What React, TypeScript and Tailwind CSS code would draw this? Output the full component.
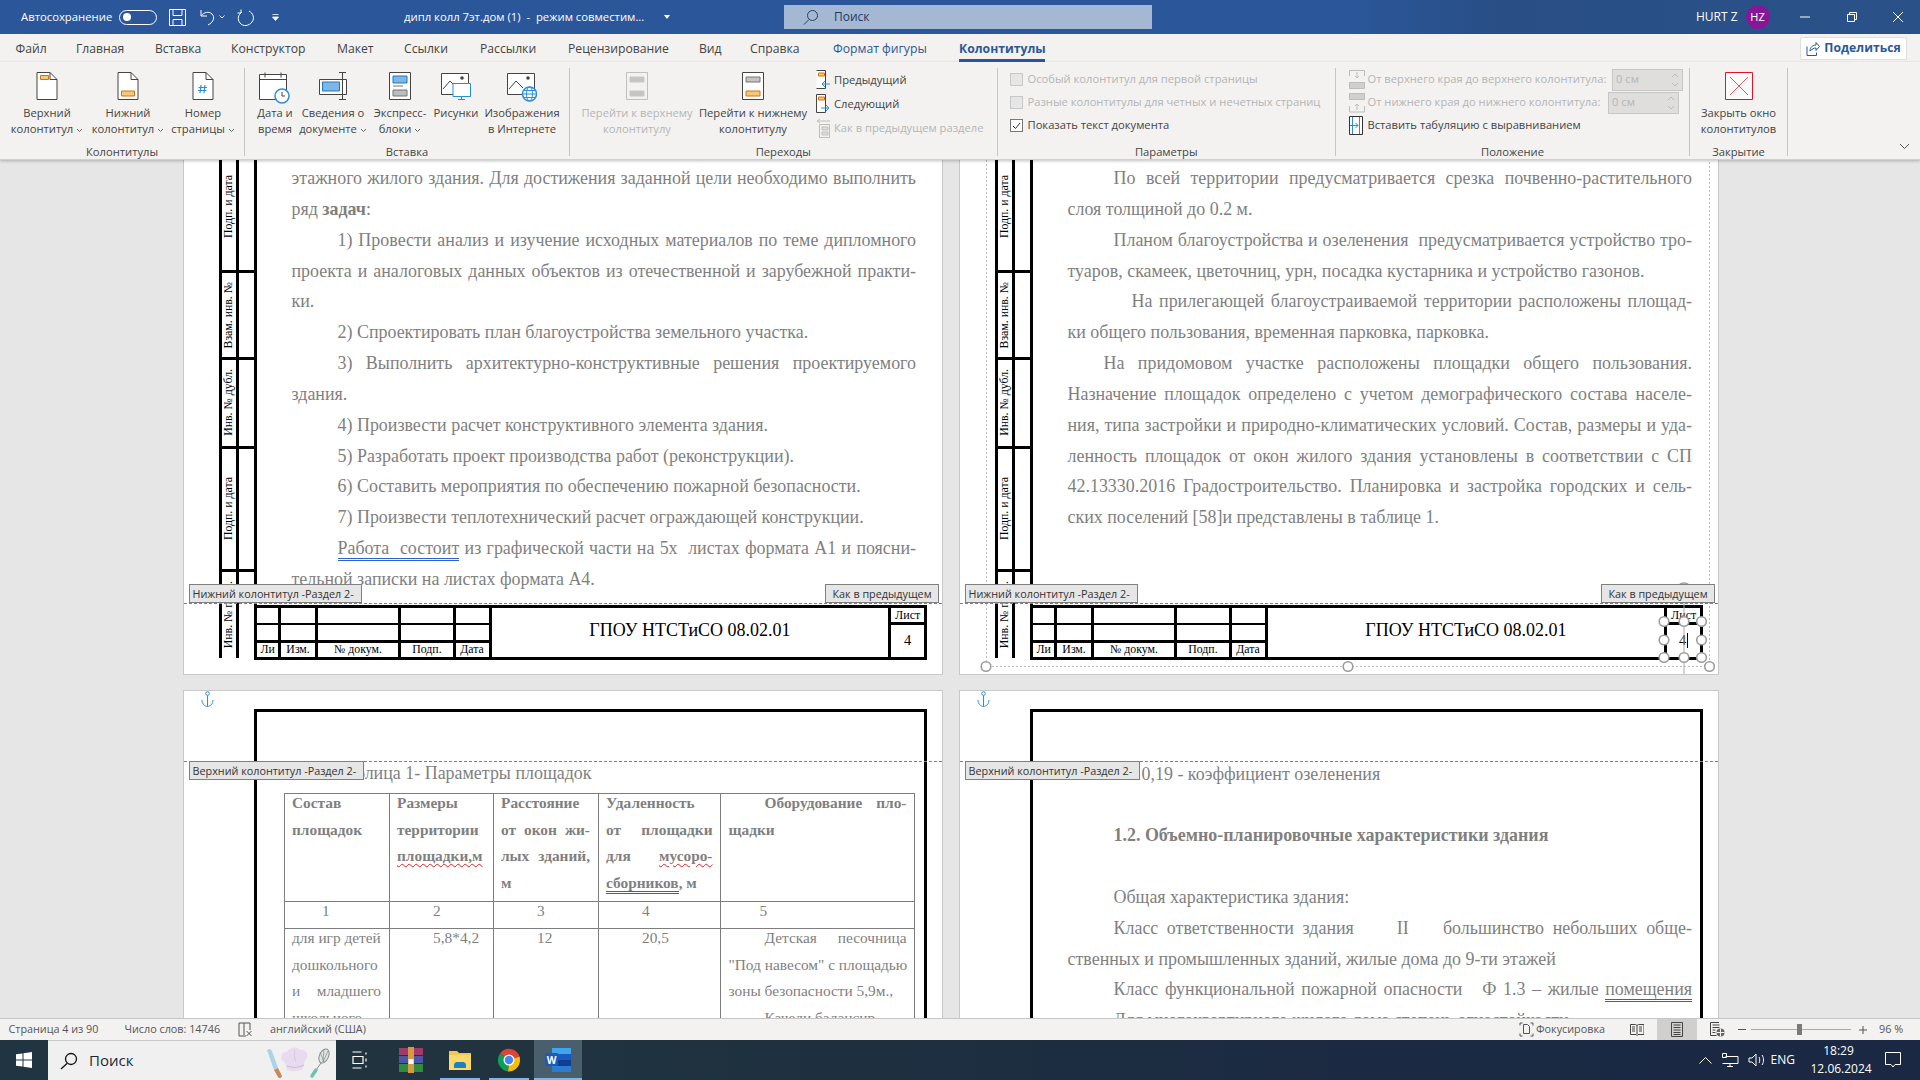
import React from "react";

const UI = "font-['Open_Sans',sans-serif]";
const SERIF = "font-['Liberation_Serif',serif]";

const Chev = ({ c = "#666" }: { c?: string }) => (
  <svg width="7" height="5" viewBox="0 0 7 5" className="inline-block ml-[3px] align-middle">
    <path d="M1 1l2.5 2.5L6 1" fill="none" stroke={c} />
  </svg>
);

const PageIcon = ({ children, stroke = "#444" }: { children?: React.ReactNode; stroke?: string }) => (
  <svg width="22" height="28" viewBox="0 0 22 28">
    <path d="M1 .5h13l7 7v20H1z" fill="#fff" stroke={stroke} />
    <path d="M14 .5v7h7" fill="none" stroke={stroke} />
    {children}
  </svg>
);

const CalendarIcon = () => (
  <svg width="32" height="32" viewBox="0 0 32 32">
    <path d="M.5 2.5h27v25H.5z" fill="#fff" stroke="#444" />
    <path d="M.5 7.5h27M6 .5v5M22 .5v5" stroke="#444" />
    <circle cx="23" cy="24" r="7" fill="#fff" stroke="#2b8fd8" strokeWidth="1.5" />
    <path d="M23 20v4h3" fill="none" stroke="#444" />
  </svg>
);
const InfoIcon = () => (
  <svg width="28" height="28" viewBox="0 0 28 28">
    <path d="M.5 7.500h27v15H.5z" fill="#fff" stroke="#444" />
    <path d="M3.500 10h17v9h-17z" fill="#7fb6e6" stroke="#1f78c1" />
    <path d="M20 .5h7M23.5.5v27M20 27.5h7" fill="none" stroke="#444" />
  </svg>
);
const ExpressIcon = () => (
  <svg width="22" height="28" viewBox="0 0 22 28">
    <path d="M.5.5h21v27H.5z" fill="#fff" stroke="#444" />
    <path d="M4 4h14v7H4z" fill="#7fb6e6" stroke="#1f78c1" />
    <path d="M4 14h10" stroke="#777" />
    <path d="M4 18h14v6H4z" fill="#bdbdbd" stroke="#777" />
  </svg>
);
const PictureIcon = () => (
  <svg width="30" height="32" viewBox="0 0 30 32">
    <path d="M.5 1.5h27v21H.5z" fill="#fff" stroke="#444" />
    <path d="M2 17l7-8 7 7" fill="none" stroke="#444" />
    <circle cx="21" cy="6" r="1.8" fill="#444" />
    <path d="M12 11.500h17.500v13H12z" fill="#fff" stroke="#2b8fd8" />
    <path d="M20.5 24.500v3M17 27.500h7" stroke="#2b8fd8" />
  </svg>
);
const OnlineIcon = () => (
  <svg width="30" height="32" viewBox="0 0 30 32">
    <path d="M.5 1.5h27v21H.5z" fill="#fff" stroke="#444" />
    <path d="M2 17l7-8 7 7" fill="none" stroke="#444" />
    <circle cx="21" cy="6" r="1.8" fill="#444" />
    <circle cx="22.5" cy="22" r="7" fill="#fff" stroke="#2b8fd8" strokeWidth="1.5" />
    <ellipse cx="22.5" cy="22" rx="3" ry="7" fill="none" stroke="#2b8fd8" />
    <path d="M15.5 22h14M16.500 18.500h12M16.500 25.500h12" stroke="#2b8fd8" />
  </svg>
);
const NavPage = ({ disabled, footer }: { disabled?: boolean; footer?: boolean }) => {
  const s = disabled ? "#c0c0c0" : "#444";
  return (
    <svg width="22" height="28" viewBox="0 0 22 28">
      <path d="M.5.5h21v27H.5z" fill={disabled ? "#f3f2f1" : "#fff"} stroke={s} />
      <path d="M4 5h14v5H4z" fill="#c4c4c4" stroke={disabled ? "#c8c8c8" : "#777"} />
      <path d="M4 19h14v5H4z" fill={footer ? "#f5c97a" : "#c4c4c4"} stroke={footer ? "#d9700a" : "#c8c8c8"} />
    </svg>
  );
};
const Prev = () => (
  <svg width="14" height="20" viewBox="0 0 14 20">
    <path d="M.5.5h9v18h-9" fill="#fff" stroke="#444" />
    <path d="M2.5 3h6v3h-6z" fill="#f5c97a" stroke="#d9700a" />
    <path d="M14 14H6m3-3l-3 3 3 3" fill="none" stroke="#2b8fd8" />
  </svg>
);
const Next = () => (
  <svg width="14" height="20" viewBox="0 0 14 20">
    <path d="M.5.5h9v18h-9z" fill="#fff" stroke="#444" />
    <path d="M2.5 3h6v3h-6z" fill="#f5c97a" stroke="#d9700a" />
    <path d="M5 14h8m-3-3l3 3-3 3" fill="none" stroke="#2b8fd8" />
  </svg>
);
const LinkPrev = () => (
  <svg width="14" height="20" viewBox="0 0 14 20">
    <path d="M3.5 6.5h10v13h-10z" fill="none" stroke="#bdbdbd" />
    <path d="M6 14h6v3H6zM6 9h6v3H6z" fill="#ddd" stroke="#c0c0c0" />
    <path d="M14 3H1m3-2L1 3l3 2" fill="none" stroke="#c0c0c0" />
  </svg>
);
const PosTop = () => (
  <svg width="16" height="20" viewBox="0 0 16 20">
    <path d="M.5 6V.5h15V6" fill="none" stroke="#bdbdbd" />
    <path d="M8 2v6m-2-2l2 2 2-2" fill="none" stroke="#bdbdbd" />
    <path d="M.5 12.5h15v6H.5z" fill="#cfcfcf" stroke="#bdbdbd" />
  </svg>
);
const PosBottom = () => (
  <svg width="16" height="20" viewBox="0 0 16 20">
    <path d="M.5.5h15v6H.5z" fill="#cfcfcf" stroke="#bdbdbd" />
    <path d="M.5 13v6h15v-6" fill="none" stroke="#bdbdbd" />
    <path d="M8 17v-6m-2 2l2-2 2 2" fill="none" stroke="#bdbdbd" />
  </svg>
);
const TabAlign = () => (
  <svg width="14" height="20" viewBox="0 0 14 20">
    <path d="M.5.5h13v18H.5z" fill="#fff" stroke="#333" />
    <path d="M3.5 1v17M10.5 1v17" stroke="#2b8fd8" />
    <path d="M1 9.5h8M6.5 7l2.5 2.5L6.5 12" fill="none" stroke="#2b8fd8" />
  </svg>
);

const Big = ({ w, icon, lines, chev, dim }: { w: string; icon: React.ReactNode; lines: React.ReactNode[]; chev?: boolean; dim?: boolean }) => (
  <div className={`${w} shrink-0 flex flex-col items-center whitespace-nowrap leading-[16px] ${dim ? "text-[#b5b5b5]" : "text-[#444]"}`}>
    <div className="h-[37px] pt-[4px] flex justify-center shrink-0">{icon}</div>
    <div>{lines[0]}</div>
    <div>
      {lines[1]}
      {chev && <Chev />}
    </div>
  </div>
);

const Group = ({ w, label, children, cls = "" }: { w: string; label: string; children: React.ReactNode; cls?: string }) => (
  <div className={`${w} shrink-0 h-[88px] mt-[6px] border-r border-[#c8c6c4] flex flex-col`}>
    <div className={`h-[76px] shrink-0 flex ${cls}`}>{children}</div>
    <div className="h-[16px] shrink-0 leading-[16px] text-center text-[#444]">{label}</div>
  </div>
);

const Box = ({ checked }: { checked?: boolean }) =>
  checked ? (
    <span className="w-[13px] h-[13px] border border-[#777] bg-white flex items-center justify-center shrink-0">
      <svg width="9" height="8" viewBox="0 0 9 8"><path d="M1 4l2.5 2.5L8 1" fill="none" stroke="#333" /></svg>
    </span>
  ) : (
    <span className="w-[13px] h-[13px] border border-[#c8c8c8] bg-[#e6e6e6] shrink-0" />
  );

const Spin = ({ w }: { w: string }) => (
  <div className={`${w} h-[22px] bg-[#dfdedc] border border-[#c6c6c6] flex items-center justify-between pl-[3px] pr-[3px] text-[#b5b5b5]`}>
    <span>0 см</span>
    <svg width="8" height="16" viewBox="0 0 8 16"><path d="M1 5l3-3 3 3M1 11l3 3 3-3" fill="none" stroke="#bbb" /></svg>
  </div>
);

const Title = () => (
  <div className="h-[34px] shrink-0 flex items-center text-white text-[12px] bg-[linear-gradient(90deg,#2b579a_0%,#2b579a_70%,#284e85_78%,#2a5289_100%)]">
    <span className="ml-[21px] w-[98px] text-[11.3px]">Автосохранение</span>
    <span className="w-[38px] h-[15px] rounded-full border border-white flex items-center pl-[3px]">
      <span className="w-[8px] h-[8px] rounded-full bg-white" />
    </span>
    <svg className="ml-[12px]" width="17" height="17" viewBox="0 0 17 17">
      <path d="M.5.5h16v16H.5zM4 .5v6h9v-6M4 16.5v-6h9v6" fill="none" stroke="#fff" />
    </svg>
    <svg className="ml-[14px]" width="16" height="17" viewBox="0 0 16 17">
      <path d="M1 1v6h6M1 7c3-4 8-5 11-2s2 8-4 11" fill="none" stroke="#fff" />
    </svg>
    <svg className="ml-[3px]" width="6" height="4" viewBox="0 0 6 4"><path d="M.5.5L3 3 5.5.5" fill="none" stroke="#dfe6f1" /></svg>
    <svg className="ml-[12px]" width="17" height="17" viewBox="0 0 17 17">
      <path d="M5 3C1 6 0 10 3 14s9 3 12-1 1-9-3-11M4 .5V4H.5" fill="none" stroke="#fff" />
    </svg>
    <svg className="ml-[18px]" width="7" height="7" viewBox="0 0 7 7"><path d="M.5.5h6M.5 3h6L3.5 6.5z" fill="#fff" stroke="#fff" strokeWidth=".8" /></svg>
    <span className="ml-[125px] w-[246px] whitespace-pre text-[11.3px]">дипл колл 7эт.дом (1)  -  режим совместим...</span>
    <svg className="ml-[14px]" width="6" height="4" viewBox="0 0 6 4"><path d="M0 0h6L3 4z" fill="#fff" /></svg>
    <div className="ml-[114px] w-[368px] h-[24px] bg-[#a5b8d3] flex items-center pl-[19px] text-[#1f3864]">
      <svg width="16" height="16" viewBox="0 0 16 16"><circle cx="9.5" cy="6.5" r="5" fill="none" stroke="#25405f" /><path d="M6 10.5L1 15.5" stroke="#25405f" /></svg>
      <span className="ml-[15px]">Поиск</span>
    </div>
    <span className="ml-[544px] w-[39px] whitespace-nowrap">HURT Z</span>
    <span className="ml-[10.5px] w-[24px] h-[24px] rounded-full bg-[#881798] flex items-center justify-center text-[11px]">HZ</span>
    <svg className="ml-[29px]" width="12" height="12" viewBox="0 0 12 12"><path d="M1 6h10" stroke="#fff" /></svg>
    <svg className="ml-[35px]" width="12" height="12" viewBox="0 0 12 12"><path d="M1.5 3.5h7v7h-7zM3.5 3.5v-2h7v7h-2" fill="none" stroke="#fff" /></svg>
    <svg className="ml-[34px]" width="12" height="12" viewBox="0 0 12 12"><path d="M1 1l10 10M11 1L1 11" stroke="#fff" /></svg>
  </div>
);

const Tabs = () => (
  <div className="h-[28px] shrink-0 flex items-center pl-[15.5px] pt-[2px] text-[#444] text-[12.2px] whitespace-nowrap">
    <span className="w-[60.5px]">Файл</span>
    <span className="w-[79px]">Главная</span>
    <span className="w-[76px]">Вставка</span>
    <span className="w-[106px]">Конструктор</span>
    <span className="w-[67px]">Макет</span>
    <span className="w-[76px]">Ссылки</span>
    <span className="w-[88px]">Рассылки</span>
    <span className="w-[131px]">Рецензирование</span>
    <span className="w-[51px]">Вид</span>
    <span className="w-[83px]">Справка</span>
    <span className="w-[126px] text-[#2b579a]">Формат фигуры</span>
    <span className="w-[86px] h-[26px] leading-[22px] pt-[2px] font-bold text-[#2b579a] border-b-[3px] border-[#2b579a]">Колонтитулы</span>
    <div className="ml-auto mr-[13px] -mt-[2px] w-[107px] h-[23px] bg-white border border-[#e1dfdd] rounded-[2px] flex items-center justify-center gap-[4px] text-[#2b579a] font-bold">
      <svg width="14" height="15" viewBox="0 0 14 15"><path d="M1 5.5V14.5h9.5v-3M4 10c0-4 3-6 6-6V1.5l3.5 4-3.5 4V7c-2 0-4 1-6 3z" fill="none" stroke="#2b579a" /></svg>
      Поделиться
    </div>
  </div>
);

const Ribbon = () => (
  <div className="h-[98px] shrink-0 flex text-[11.2px] shadow-[0_1px_3px_rgba(0,0,0,0.25)] border-b border-[#d2d0ce] relative z-10 bg-[#f3f2f1]">
    <Group w="w-[245px]" label="Колонтитулы" cls="pl-[5px]">
      <Big w="w-[84px]" chev lines={["Верхний", "колонтитул"]} icon={<PageIcon><path d="M4.5 3.5h8v4h-8z" fill="#f5c97a" stroke="#d9700a" /></PageIcon>} />
      <Big w="w-[78px]" chev lines={["Нижний", "колонтитул"]} icon={<PageIcon><path d="M4.5 19h13v5h-13z" fill="#f5c97a" stroke="#d9700a" /></PageIcon>} />
      <Big w="w-[72px]" chev lines={["Номер", "страницы"]} icon={<PageIcon><path d="M9 13l-1 8M13 13l-1 8M6.5 15.5h8.5M6 18.5h8.5" stroke="#2b8fd8" strokeWidth="1.2" /></PageIcon>} />
    </Group>
    <Group w="w-[325px]" label="Вставка" cls="pl-[5px]">
      <Big w="w-[50px]" lines={["Дата и", "время"]} icon={<CalendarIcon />} />
      <Big w="w-[66px]" chev lines={["Сведения о", "документе"]} icon={<InfoIcon />} />
      <Big w="w-[68px]" chev lines={["Экспресс-", "блоки"]} icon={<ExpressIcon />} />
      <Big w="w-[44px]" lines={["Рисунки", " "]} icon={<PictureIcon />} />
      <Big w="w-[88px]" lines={["Изображения", "в Интернете"]} icon={<OnlineIcon />} />
    </Group>
    <Group w="w-[427.5px]" label="Переходы" cls="pl-[2px]">
      <Big w="w-[130px]" dim lines={["Перейти к верхнему", "колонтитулу"]} icon={<NavPage disabled />} />
      <Big w="w-[102px]" lines={["Перейти к нижнему", "колонтитулу"]} icon={<NavPage footer />} />
      <div className="ml-[12px] flex flex-col text-[#444] whitespace-nowrap">
        <div className="h-[24px] flex items-center gap-[4px]"><Prev /><span>Предыдущий</span></div>
        <div className="h-[24px] flex items-center gap-[4px]"><Next /><span>Следующий</span></div>
        <div className="h-[24px] flex items-center gap-[4px] text-[#b5b5b5]"><LinkPrev /><span>Как в предыдущем разделе</span></div>
      </div>
    </Group>
    <Group w="w-[338.5px]" label="Параметры" cls="pl-[12px] flex-col">
      <div className="h-[23px] flex items-center gap-[5px] text-[#b5b5b5] whitespace-nowrap"><Box /><span>Особый колонтитул для первой страницы</span></div>
      <div className="h-[23px] flex items-center gap-[5px] text-[#b5b5b5] whitespace-nowrap"><Box /><span>Разные колонтитулы для четных и нечетных страниц</span></div>
      <div className="h-[23px] flex items-center gap-[5px] text-[#444] whitespace-nowrap"><Box checked /><span>Показать текст документа</span></div>
    </Group>
    <Group w="w-[354px]" label="Положение" cls="pl-[12.5px] flex-col">
      <div className="h-[23px] flex items-center text-[#b5b5b5] whitespace-nowrap">
        <PosTop /><span className="ml-[3px] w-[244.5px]">От верхнего края до верхнего колонтитула:</span><Spin w="w-[71px]" />
      </div>
      <div className="h-[23px] flex items-center text-[#b5b5b5] whitespace-nowrap">
        <PosBottom /><span className="ml-[3px] w-[240.5px]">От нижнего края до нижнего колонтитула:</span><Spin w="w-[71px]" />
      </div>
      <div className="h-[23px] flex items-center text-[#444] whitespace-nowrap">
        <TabAlign /><span className="ml-[5px]">Вставить табуляцию с выравниванием</span>
      </div>
    </Group>
    <Group w="w-[98px]" label="Закрытие">
      <div className="w-full">
        <Big
          w="w-full"
          lines={["Закрыть окно", "колонтитулов"]}
          icon={
            <svg width="28" height="28" viewBox="0 0 28 28">
              <path d="M.5.5h27v27H.5z" fill="#fbfbfb" stroke="#e81123" />
              <path d="M5 5l18 18M23 5L5 23" stroke="#e8505b" />
            </svg>
          }
        />
      </div>
    </Group>
    <svg className="ml-[111px] mt-[81px]" width="11" height="7" viewBox="0 0 11 7"><path d="M1 1l4.5 4.5L10 1" fill="none" stroke="#555" /></svg>
  </div>
);

const Line = ({ children, j, ind = "" }: { children: React.ReactNode; j?: boolean; ind?: string }) => (
  <div className={`h-[30.85px] leading-[30.85px] whitespace-pre-wrap ${j ? "text-justify [text-align-last:justify]" : ""} ${ind}`}>{children}</div>
);

const BlueU = ({ children }: { children: React.ReactNode }) => (
  <span className="border-b-[3px] border-double border-[#2f62c9]">{children}</span>
);

const Vert = ({ children }: { children: React.ReactNode }) => (
  <span className="[writing-mode:vertical-rl] [text-orientation:sideways] rotate-180 whitespace-nowrap text-[11.8px] leading-none text-black">{children}</span>
);

const Cell = ({ h, text, last }: { h: string; text: string; last?: boolean }) => (
  <div className={`${h} flex ${last ? "" : "border-b-[3.5px] border-black"}`}>
    <div className="w-[14.5px] shrink-0 border-r-[3.5px] border-black flex items-center justify-center box-content"><Vert>{text}</Vert></div>
    <div className="flex-1" />
  </div>
);

const StampCell = ({ cls, children }: { cls: string; children?: React.ReactNode }) => (
  <div className={`${cls} flex items-center justify-center text-[11.8px] leading-none text-black whitespace-nowrap overflow-visible`}>{children}</div>
);

const Frame = ({ editing }: { editing?: boolean }) => (
  <>
    <div className={`absolute left-[34.5px] top-[-17px] w-[38.5px] h-[515px] border-x-[3.5px] border-black bg-white flex flex-col ${SERIF}`}>
      <Cell h="h-[130px]" text="Подп. и дата" />
      <Cell h="h-[86.5px]" text="Взам. инв. №" />
      <Cell h="h-[89px]" text="Инв. № дубл." />
      <Cell h="h-[123.5px]" text="Подп. и дата" />
      <Cell h="h-[86px]" text="Инв. № подл." last />
    </div>
    <div className={`absolute left-[70px] top-[445px] w-[673px] h-[55px] border-[3.5px] border-black bg-white flex ${SERIF}`}>
      <div className="grid grid-cols-[24.4px_36.4px_83.5px_54.3px_33px] grid-rows-[16.5px_18.5px_1fr] shrink-0">
        <StampCell cls="border-r-[3px] border-b-2 border-black" />
        <StampCell cls="border-r-[3px] border-b-2 border-black" />
        <StampCell cls="border-r-[3px] border-b-2 border-black" />
        <StampCell cls="border-r-[3px] border-b-2 border-black" />
        <StampCell cls="border-b-2 border-black" />
        <StampCell cls="border-r-[3px] border-b-[3px] border-black" />
        <StampCell cls="border-r-[3px] border-b-[3px] border-black" />
        <StampCell cls="border-r-[3px] border-b-[3px] border-black" />
        <StampCell cls="border-r-[3px] border-b-[3px] border-black" />
        <StampCell cls="border-b-[3px] border-black" />
        <StampCell cls="border-r-[3px] border-black">Ли</StampCell>
        <StampCell cls="border-r-[3px] border-black">Изм.</StampCell>
        <StampCell cls="border-r-[3px] border-black">№ докум.</StampCell>
        <StampCell cls="border-r-[3px] border-black">Подп.</StampCell>
        <StampCell cls="">Дата</StampCell>
      </div>
      <div className="flex-1 border-x-[3.5px] border-black flex items-center justify-center text-[18px] text-black pb-[5px] whitespace-nowrap">ГПОУ НТСТиСО 08.02.01</div>
      <div className="w-[32.7px] shrink-0 flex flex-col">
        <div className="h-[16.5px] border-b-[3px] border-black flex items-center justify-center text-[12px] text-black">Лист</div>
        <div className="flex-1 flex items-center justify-center text-[14.5px] text-black">
          4{editing && <span className="ml-[1px] w-[1px] h-[15px] bg-black" />}
        </div>
      </div>
    </div>
    <div className="absolute left-0 right-0 top-[443px] border-t border-dashed border-[#808080]" />
    {editing && (
      <svg className="absolute left-0 top-0" width="758" height="514">
        <path d="M26.5 0V506.5H749.5V0" fill="none" stroke="#bdbdbd" strokeDasharray="2 2" />
        <path d="M724 443V514" stroke="#a8a8a8" />
        <circle cx="724" cy="431" r="8" fill="#fff" stroke="#a0a0a0" strokeWidth="1.5" />
        <circle cx="724" cy="431" r="4.5" fill="none" stroke="#a0a0a0" strokeWidth="1.5" />
        {[[26, 506.5], [388, 506.5], [749.5, 506.5], [704, 461.5], [724, 461.5], [741.5, 461.5], [704, 480], [741.5, 480], [704, 497.5], [724, 497.5], [741.5, 497.5]].map(([x, y], i) => (
          <circle key={i} cx={x} cy={y} r="4.8" fill="#fff" stroke="#9c9c9c" strokeWidth="1.6" />
        ))}
      </svg>
    )}
    <div className={`absolute left-[4.5px] top-[424px] w-[173px] h-[19px] bg-[#e6e6e6] border border-[#808080] text-[#333] text-[10.8px] leading-[18px] pl-[3px] whitespace-nowrap ${UI}`}>Нижний колонтитул -Раздел 2-</div>
    <div className={`absolute left-[641px] top-[424px] w-[114px] h-[19px] bg-[#e6e6e6] border border-[#808080] text-[#333] text-[10.8px] leading-[18px] text-center whitespace-nowrap ${UI}`}>Как в предыдущем</div>
  </>
);

const LowerOverlay = () => (
  <>
    <div className="absolute left-[70px] top-[18px] w-[673px] h-[400px] border-[3.5px] border-b-0 border-black pointer-events-none" />
    <svg className="absolute left-[17px] top-[0px]" width="13" height="17" viewBox="0 0 13 17">
      <circle cx="6.5" cy="2.5" r="1.8" fill="none" stroke="#2b8fd8" />
      <path d="M6.5 4.5V15.5M1 9c0 4 3 6.5 5.5 6.5S12 13 12 9" fill="none" stroke="#2b8fd8" />
    </svg>
    <div className="absolute left-0 right-0 top-[70px] border-t border-dashed border-[#808080]" />
    <div className={`absolute left-[4.5px] top-[70px] w-[175px] h-[19px] bg-[#e6e6e6] border border-[#808080] text-[#333] text-[10.8px] leading-[18px] pl-[3px] whitespace-nowrap ${UI}`}>Верхний колонтитул -Раздел 2-</div>
  </>
);

const TL = ({ children, j, ind = "" }: { children: React.ReactNode; j?: boolean; ind?: string }) => (
  <div className={`h-[26.7px] leading-[26.7px] whitespace-nowrap ${j ? "text-justify [text-align-last:justify]" : ""} ${ind}`}>{children}</div>
);
const Wavy = ({ children }: { children: React.ReactNode }) => (
  <span className="underline decoration-wavy decoration-[#e02020] decoration-1 underline-offset-2">{children}</span>
);
const TD = ({ children, cls = "" }: { children: React.ReactNode; cls?: string }) => (
  <td className={`border border-[#7d7d7d] align-top px-[7.5px] pt-0 ${cls}`}>
    <div className="-mt-[4.5px]">{children}</div>
  </td>
);

const LeftTop = () => (
  <div className={`w-[758px] h-[514px] shrink-0 bg-white relative overflow-hidden ${SERIF} shadow-[0_0_0_1px_#c8c8c8]`}>
    <div className="pl-[107.5px] pr-[26px] pt-[3px] text-[17.95px] text-[#7f7f7f]">
      <Line j>этажного жилого здания. Для достижения заданной цели необходимо выполнить</Line>
      <Line>ряд <b>задач</b>:</Line>
      <Line j ind="pl-[46px]">1) Провести анализ и изучение исходных материалов по теме дипломного</Line>
      <Line j>проекта и аналоговых данных объектов из отечественной и зарубежной практи-</Line>
      <Line>ки.</Line>
      <Line ind="pl-[46px]">2) Спроектировать план благоустройства земельного участка.</Line>
      <Line j ind="pl-[46px]">3) Выполнить архитектурно-конструктивные решения проектируемого</Line>
      <Line>здания.</Line>
      <Line ind="pl-[46px]">4) Произвести расчет конструктивного элемента здания.</Line>
      <Line ind="pl-[46px]">5) Разработать проект производства работ (реконструкции).</Line>
      <Line ind="pl-[46px]">6) Составить мероприятия по обеспечению пожарной безопасности.</Line>
      <Line ind="pl-[46px]">7) Произвести теплотехнический расчет ограждающей конструкции.</Line>
      <Line j ind="pl-[46px]"><BlueU>Работа  состоит</BlueU> из графической части на 5х  листах формата А1 и поясни-</Line>
      <Line>тельной записки на листах формата А4.</Line>
    </div>
    <Frame />
  </div>
);

const RightTop = () => (
  <div className={`w-[758px] h-[514px] shrink-0 bg-white relative overflow-hidden ${SERIF} shadow-[0_0_0_1px_#c8c8c8]`}>
    <div className="pl-[107.5px] pr-[26px] pt-[3px] text-[17.95px] text-[#7f7f7f]">
      <Line j ind="pl-[46px]">По всей территории предусматривается срезка почвенно-растительного</Line>
      <Line>слоя толщиной до 0.2 м.</Line>
      <Line j ind="pl-[46px]">Планом благоустройства и озеленения  предусматривается устройство тро-</Line>
      <Line>туаров, скамеек, цветочниц, урн, посадка кустарника и устройство газонов.</Line>
      <Line j ind="pl-[64px]">На прилегающей благоустраиваемой территории расположены площад-</Line>
      <Line>ки общего пользования, временная парковка, парковка.</Line>
      <Line j ind="pl-[36px]">На придомовом участке расположены площадки общего пользования.</Line>
      <Line j>Назначение площадок определено с учетом демографического состава населе-</Line>
      <Line j>ния, типа застройки и природно-климатических условий. Состав, размеры и уда-</Line>
      <Line j>ленность площадок от окон жилого здания установлены в соответствии с СП</Line>
      <Line j>42.13330.2016 Градостроительство. Планировка и застройка городских и сель-</Line>
      <Line>ских поселений [58]и представлены в таблице 1.</Line>
    </div>
    <Frame editing />
  </div>
);

const LeftBottom = () => (
  <div className={`w-[758px] h-[514px] shrink-0 bg-white relative overflow-hidden ${SERIF} shadow-[0_0_0_1px_#c8c8c8]`}>
    <div className="pl-[107.5px] pt-[67px] text-[17.95px] text-[#7f7f7f]">
      <Line ind="pl-[46px]">Таблица 1- Параметры площадок</Line>
    </div>
    <table className="ml-[99.5px] mt-[4.5px] w-[630.5px] table-fixed border-collapse text-[15.36px] text-[#7f7f7f]">
      <colgroup>
        <col className="w-[105px]" />
        <col className="w-[104px]" />
        <col className="w-[105px]" />
        <col className="w-[122.5px]" />
        <col className="w-[194px]" />
      </colgroup>
      <tbody>
        <tr className="h-[108px] font-bold">
          <TD><TL>Состав</TL><TL>площадок</TL></TD>
          <TD><TL>Размеры</TL><TL j>территории</TL><TL><Wavy>площадки,м</Wavy></TL></TD>
          <TD><TL>Расстояние</TL><TL j>от окон жи-</TL><TL j>лых зданий,</TL><TL>м</TL></TD>
          <TD><TL>Удаленность</TL><TL j>от площадки</TL><TL j>для <Wavy>мусоро-</Wavy></TL><TL><BlueU>сборников</BlueU>, м</TL></TD>
          <TD><TL j ind="pl-[36px]">Оборудование пло-</TL><TL>щадки</TL></TD>
        </tr>
        <tr className="h-[27px]">
          <TD><TL ind="pl-[30px]">1</TL></TD>
          <TD><TL ind="pl-[36px]">2</TL></TD>
          <TD><TL ind="pl-[36px]">3</TL></TD>
          <TD><TL ind="pl-[36px]">4</TL></TD>
          <TD><TL ind="pl-[31px]">5</TL></TD>
        </tr>
        <tr>
          <TD><TL>для игр детей</TL><TL>дошкольного</TL><TL j>и младшего</TL><TL>школьного</TL></TD>
          <TD><TL ind="pl-[36px]">5,8*4,2</TL></TD>
          <TD><TL ind="pl-[36px]">12</TL></TD>
          <TD><TL ind="pl-[36px]">20,5</TL></TD>
          <TD><TL j ind="pl-[36px]">Детская песочница</TL><TL>"Под навесом" с площадью</TL><TL>зоны безопасности 5,9м.,</TL><TL ind="pl-[36px]">Качели балансир</TL></TD>
        </tr>
      </tbody>
    </table>
    <LowerOverlay />
  </div>
);

const RightBottom = () => (
  <div className={`w-[758px] h-[514px] shrink-0 bg-white relative overflow-hidden ${SERIF} shadow-[0_0_0_1px_#c8c8c8]`}>
    <div className="pl-[107.5px] pr-[26px] pt-[67.5px] text-[17.95px] text-[#7f7f7f]">
      <Line ind="pl-[74px]">0,19 - коэффициент озеленения</Line>
      <Line> </Line>
      <Line ind="pl-[46px]"><b>1.2. Объемно-планировочные характеристики здания</b></Line>
      <Line> </Line>
      <Line ind="pl-[46px]">Общая характеристика здания:</Line>
      <Line j ind="pl-[46px]">Класс ответственности здания     II    большинство небольших обще-</Line>
      <Line>ственных и промышленных зданий, жилые дома до 9-ти этажей</Line>
      <Line j ind="pl-[46px]">Класс функциональной пожарной опасности   Ф 1.3 – жилые <BlueU>помещения</BlueU></Line>
      <Line ind="pl-[46px]">Для многоквартирного жилого дома степень огнестойкости</Line>
    </div>
    <LowerOverlay />
  </div>
);

const Status = () => (
  <div className={`h-[22px] shrink-0 bg-[#f3f2f1] border-t border-[#c6c6c6] flex items-center text-[10.8px] text-[#555] whitespace-nowrap relative z-10 ${UI}`}>
    <span className="ml-[8.5px] w-[116px]">Страница 4 из 90</span>
    <span className="w-[113.5px]">Число слов: 14746</span>
    <svg width="15" height="15" viewBox="0 0 15 15"><path d="M8 14H1V1h11v7M6 1v12M8.5 9l5 5M13.5 9l-5 5" fill="none" stroke="#555" /></svg>
    <span className="ml-[17px] w-[1249px]">английский (США)</span>
    <svg width="15" height="15" viewBox="0 0 15 15"><path d="M1 3.5V1h2.500M11.500 1H14v2.500M1 11.500V14h2.500M11.500 14H14v-2.500M4.500 2.500h4l2 2v7h-6z" fill="none" stroke="#555" /></svg>
    <span className="ml-[2px] w-[94px]">Фокусировка</span>
    <svg width="14" height="13" viewBox="0 0 14 13"><path d="M.5 1.500h5l1.500 1 1.500-1h5.500v10H8l-1 1-1-1H.5zM7 2.500v9M2 4h3M2 6h3M2 8h3M9 4h3M9 6h3M9 8h3" fill="none" stroke="#444" /></svg>
    <div className="ml-[13px] w-[40px] h-[21px] bg-[#d0cfce] flex items-center justify-center">
      <svg width="12" height="15" viewBox="0 0 12 15"><path d="M.5.5h11v14H.5zM2.500 3h7M2.500 5.500h7M2.500 8h7M2.500 10.500h7M2.500 12.500h7" fill="none" stroke="#444" /></svg>
    </div>
    <svg className="ml-[13px]" width="15" height="15" viewBox="0 0 15 15"><path d="M9 .5H.5v13h6M2.500 3h7M2.500 5.500h7M2.500 8h3M2.500 10.500h3" fill="none" stroke="#444" /><circle cx="10.500" cy="10.500" r="4" fill="#666" /><path d="M6.500 10.500h8M10.500 6.500v8" stroke="#f3f2f1" /></svg>
    <span className="ml-[13px] w-[8px] h-[1px] bg-[#555]" />
    <div className="ml-[5px] w-[100px] h-[1px] bg-[#aaa] relative">
      <span className="absolute left-[46px] top-[-5px] w-[5px] h-[11px] bg-[#7a7a7a]" />
    </div>
    <svg className="ml-[8px]" width="8" height="8" viewBox="0 0 8 8"><path d="M0 4h8M4 0v8" stroke="#555" /></svg>
    <span className="ml-[12px]">96 %</span>
  </div>
);

const Chrome = () => (
  <svg width="24" height="24" viewBox="0 0 24 24">
    <path d="M12 12L3 5.500A11 11 0 0 1 22.500 8.500z" fill="#db4437" />
    <path d="M12 12L22.500 8.500A11.500 11.500 0 0 1 11 23.500z" fill="#fbbc05" />
    <path d="M12 12L11 23.500A11.500 11.500 0 0 1 3 5.500z" fill="#0f9d58" />
    <circle cx="12" cy="12" r="5.500" fill="#fff" />
    <circle cx="12" cy="12" r="4.200" fill="#4285f4" />
  </svg>
);

const Taskbar = () => (
  <div className={`h-[40px] shrink-0 flex items-center text-white text-[12px] bg-[linear-gradient(90deg,#203541_0%,#20333f_30%,#1b2a42_70%,#1a2844_100%)] ${UI}`}>
    <svg className="ml-[16px]" width="16" height="16" viewBox="0 0 16 16"><path d="M0 2.300L6.500 1.400V7.500H0zM7.500 1.200L16 0V7.500H7.500zM0 8.500H6.500V14.600L0 13.700zM7.500 8.500H16V16L7.500 14.800z" fill="#fff" /></svg>
    <div className="ml-[16px] w-[287.5px] h-[40px] bg-[#f0f0f0] border-t border-[#c9c9c9] flex items-center text-[#1c2b3a] relative">
      <svg className="ml-[12px]" width="18" height="18" viewBox="0 0 18 18"><circle cx="11" cy="7" r="5.500" fill="none" stroke="#111" strokeWidth="1.300" /><path d="M7 11.500L1 17" stroke="#111" strokeWidth="1.300" /></svg>
      <span className="ml-[11px] text-[15px]">Поиск</span>
      <svg className="ml-auto mr-[5px]" width="66" height="38" viewBox="0 0 66 38">
        <path d="M2 8c2-2 4-1 5 1l6 17-4 2z" fill="#a9d3e8" />
        <path d="M9 28l4-2 4 8c0 2-3 3-4 1z" fill="#c98a55" />
        <path d="M22 28c-1-4-1-6-3-8-5-3-3-11 3-10 2-5 10-6 13-2 5-1 9 3 7 8-1 2-3 3-3 5l-1 6c-6 3-12 3-16 1z" fill="#e9dbef" />
        <path d="M22 24c5 2 11 2 17-1" fill="none" stroke="#cdb8d8" />
        <path d="M30 8c-1 3-1 8 1 12" fill="none" stroke="#d6c6e0" />
        <ellipse cx="59" cy="14" rx="4.500" ry="7.500" transform="rotate(25 59 14)" fill="#dfe6e8" stroke="#8a8a8a" strokeWidth="1" />
        <path d="M55 10l4 10M59 7l-1 13M63 9l-5 11" stroke="#8a8a8a" strokeWidth=".7" fill="none" />
        <path d="M56 21l-5 7" stroke="#8a8a8a" />
        <path d="M51 28l-4 6" stroke="#6fc0b0" strokeWidth="3.500" strokeLinecap="round" />
      </svg>
    </div>
    <svg className="ml-[16px]" width="16" height="18" viewBox="0 0 16 18"><path d="M.5 1h9M.5 17h9M1 5.500h10v7H1zM14 1.500v2M14 7.500v3M14 14.500v2" fill="none" stroke="#fff" strokeWidth="1.200" /></svg>
    <svg className="ml-[31.5px]" width="24" height="26" viewBox="0 0 24 26">
      <rect y="1" width="24" height="7" fill="#a03a6a" />
      <rect y="9" width="24" height="7" fill="#4c55a8" />
      <rect y="17" width="24" height="8" fill="#2f8c3c" />
      <rect x="9" width="6" height="26" fill="#d69a45" />
      <rect x="9.500" y="12" width="5" height="5" fill="#fff" />
    </svg>
    <div className="ml-[17px] w-[40px] h-[40px] flex items-center justify-center relative">
      <svg width="22" height="22" viewBox="0 0 22 22">
        <path d="M0 2h8l2 2h12v17H0z" fill="#f2c94c" />
        <path d="M0 6h22v15H0z" fill="#fbd96a" />
        <path d="M7 13h8l2 2v4H5v-4z" fill="#1f7fc4" />
      </svg>
      <span className="absolute left-0 right-0 bottom-0 h-[2px] bg-[#76b9ed]" />
    </div>
    <div className="ml-[9px] w-[40px] h-[40px] flex items-center justify-center relative">
      <Chrome />
      <span className="absolute left-0 right-0 bottom-0 h-[2px] bg-[#76b9ed]" />
    </div>
    <div className="ml-[5px] w-[48px] h-[40px] bg-[#4a5f6c] flex items-center justify-center relative">
      <svg width="26" height="24" viewBox="0 0 26 24">
        <path d="M7 0h19v24H7z" fill="#2b7cd3" />
        <path d="M7 6h19v6H7z" fill="#185abd" />
        <path d="M7 12h19v6H7z" fill="#103f91" />
        <path d="M7 0h19v6H7z" fill="#41a5ee" />
        <rect x="0" y="5" width="13" height="13" rx="1" fill="#185abd" />
        <text x="6.500" y="15.500" textAnchor="middle" fontSize="10" fontWeight="700" fill="#fff" fontFamily="'Open Sans',sans-serif">W</text>
      </svg>
      <span className="absolute left-0 right-0 bottom-0 h-[2px] bg-[#76b9ed]" />
    </div>
    <svg className="ml-[1116.5px]" width="13" height="7" viewBox="0 0 13 7"><path d="M.5 6.500l6-6 6 6" fill="none" stroke="#fff" /></svg>
    <svg className="ml-[10px]" width="17" height="14" viewBox="0 0 17 14"><path d="M3.500 3.500H16v7H.5M8 10.500v3M5 13.500h6M.5.500h4v4h-4z" fill="none" stroke="#fff" /></svg>
    <svg className="ml-[9px]" width="17" height="14" viewBox="0 0 17 14"><path d="M1 5h3l4-4v12L4 9H1zM11 4c1 2 1 4 0 6M14 2c2 3 2 7 0 10" fill="none" stroke="#fff" /></svg>
    <span className="ml-[6px] w-[41px]">ENG</span>
    <div className="w-[56px] -ml-[1px] text-center leading-[18px]">
      <div>18:29</div>
      <div>12.06.2024</div>
    </div>
    <svg className="ml-[18px]" width="16" height="16" viewBox="0 0 16 16"><path d="M.5.500h15v12H10l-2 2.500-2-2.500H.5z" fill="none" stroke="#fff" /></svg>
  </div>
);

export default function App() {
  return (
    <div className={`w-[1920px] h-[1080px] overflow-hidden flex flex-col bg-[#e6e6e6] ${UI}`}>
      <Title />
      <div className="bg-[#f3f2f1] shrink-0">
        <Tabs />
      </div>
      <Ribbon />
      <div className="h-[858px] shrink-0 overflow-hidden flex flex-col gap-[17px] pl-[184px]">
        <div className="flex gap-[18px] shrink-0">
          <LeftTop />
          <RightTop />
        </div>
        <div className="flex gap-[18px] shrink-0">
          <LeftBottom />
          <RightBottom />
        </div>
      </div>
      <Status />
      <Taskbar />
    </div>
  );
}
